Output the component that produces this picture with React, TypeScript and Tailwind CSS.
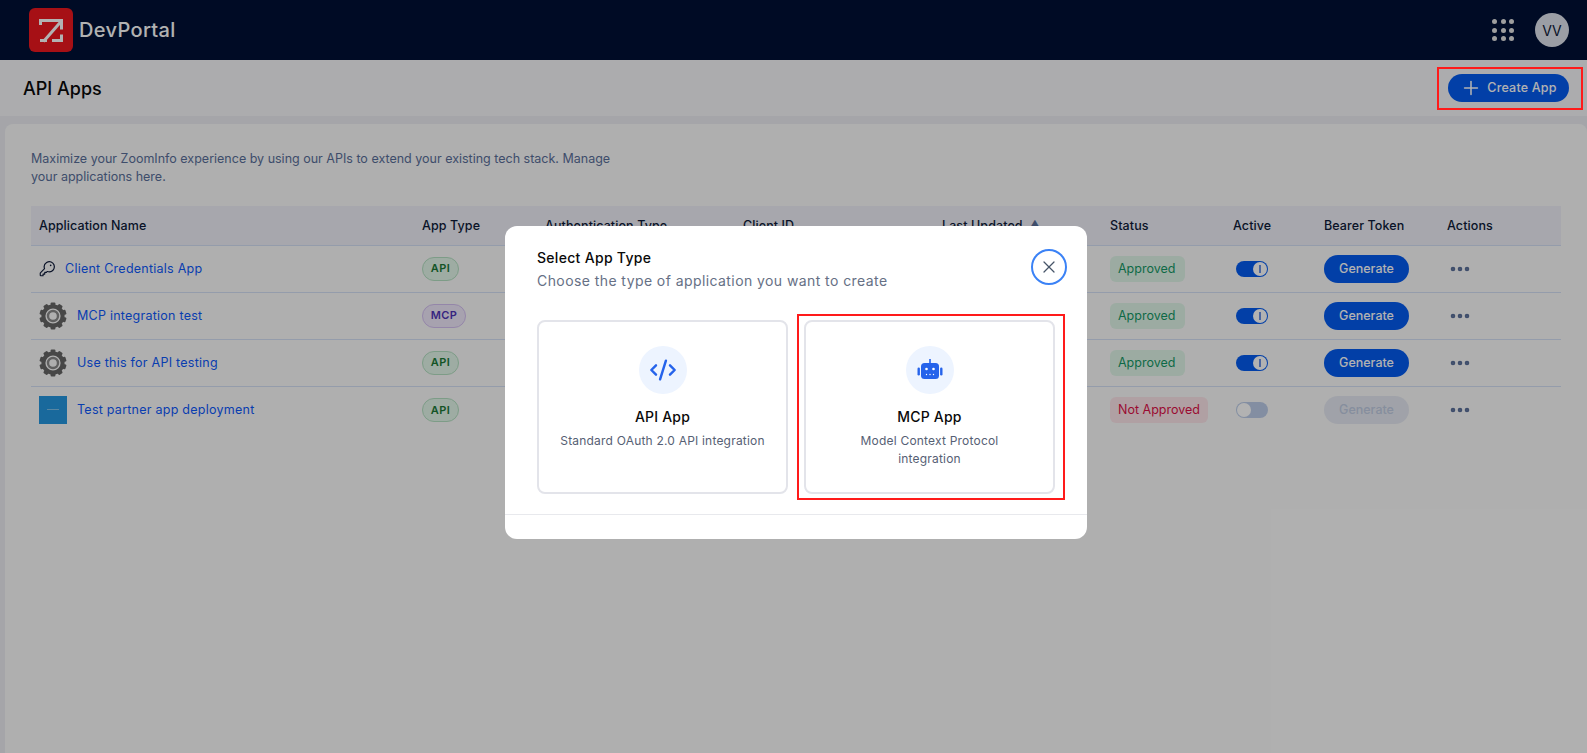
import { CodeXml, Ellipsis, Plus, X } from "lucide-react";
import { PiKey } from "react-icons/pi";

type Row = {
  name: string;
  icon: "key" | "gear" | "partner";
  type: "API" | "MCP";
  approved: boolean;
};

const rows: Row[] = [
  { name: "Client Credentials App", icon: "key", type: "API", approved: true },
  { name: "MCP integration test", icon: "gear", type: "MCP", approved: true },
  { name: "Use this for API testing", icon: "gear", type: "API", approved: true },
  { name: "Test partner app deployment", icon: "partner", type: "API", approved: false },
];

function Logo() {
  return (
    <div className="w-11 h-11 rounded-[6px] bg-[#ee181f] flex items-center justify-center">
      <svg viewBox="0 0 44 44" className="w-11 h-11" fill="none" stroke="#fff" strokeWidth="3">
        <path d="M11.5 17V12.5H25" />
        <path d="M14.5 33.5L32 13.5" />
        <path d="M24.5 12.5H32.5V21.5" />
        <path d="M11 32.5H18" />
        <path d="M23 32.5H32.5V26.5" />
      </svg>
    </div>
  );
}

function Gear() {
  const teeth = Array.from({ length: 10 }, (_, i) => i * 36);
  return (
    <svg viewBox="0 0 28 28" className="w-7 h-7">
      {teeth.map((deg) => (
        <rect key={deg} x="11.6" y="0.4" width="4.8" height="5" rx="1" fill="#666" transform={`rotate(${deg} 14 14)`} />
      ))}
      <circle cx="14" cy="14" r="9.6" fill="none" stroke="#666" strokeWidth="4" />
      <circle cx="14" cy="14" r="5" fill="none" stroke="#8a8a8a" strokeWidth="2.4" />
    </svg>
  );
}

function AppIcon({ icon }: { icon: Row["icon"] }) {
  if (icon === "key") return <PiKey className="w-[18px] h-[18px] text-[#0e1a39] -ml-px mr-[9px]" />;
  if (icon === "gear") return <div className="mr-[10px]"><Gear /></div>;
  return (
    <div className="w-7 h-7 mr-[10px] bg-[#2597e0] flex items-center justify-center">
      <div className="w-3 h-px bg-[#7fc0e8]" />
    </div>
  );
}

function TypeBadge({ type }: { type: Row["type"] }) {
  const cls =
    type === "API"
      ? "w-[37px] bg-[#e3f6ea] border-[#b4e0c2] text-[#1c7a37]"
      : "w-[44px] bg-[#efe9fb] border-[#d5c0f2] text-[#4f34b8]";
  return (
    <span className={`inline-flex h-6 items-center justify-center rounded-full border text-[11px] font-semibold tracking-[0.4px] ${cls}`}>
      {type}
    </span>
  );
}

function Toggle({ on }: { on: boolean }) {
  return (
    <div className={`w-8 h-4 rounded-full flex items-center px-px ml-[3px] ${on ? "bg-[#045bf0] justify-end" : "bg-[#bccce8]"}`}>
      <div className="w-[14px] h-[14px] rounded-full bg-white flex items-center justify-center">
        {on && <div className="w-[2px] h-2 bg-[#6c93e6]" />}
      </div>
    </div>
  );
}

function AppTypeCard({ title, text, icon }: { title: string; text: React.ReactNode; icon: React.ReactNode }) {
  return (
    <div className="w-[251px] h-[174px] rounded-lg border-2 border-[#e3e4ea] flex flex-col items-center pt-6 px-2 text-center">
      <div className="w-12 h-12 rounded-full bg-[#edf4ff] flex items-center justify-center text-[#2563eb]">{icon}</div>
      <div className="mt-[13px] text-[14px] leading-5 font-medium text-[#0a0a0a] tracking-[0.2px]">{title}</div>
      <div className="mt-[5px] text-[12px] leading-[18px] text-[#566074] tracking-[0.2px]">{text}</div>
    </div>
  );
}

export default function App() {
  return (
    <div className="relative h-screen overflow-hidden flex flex-col bg-[#ecedf3] font-['Inter','Liberation_Sans',sans-serif]">
      <header className="h-[60px] shrink-0 bg-[#001136] flex items-center justify-between pl-[29px] pr-[18px]">
        <div className="flex items-center gap-[6px]">
          <Logo />
          <span className="text-white text-[20px] font-medium tracking-[0.35px]">DevPortal</span>
        </div>
        <div className="flex items-center gap-[21px]">
          <div className="grid grid-cols-3 gap-[3.5px]">
            {Array.from({ length: 9 }, (_, i) => (
              <span key={i} className="w-[5px] h-[5px] rounded-full bg-[#e3e3e3]" />
            ))}
          </div>
          <div className="w-[34px] h-[34px] rounded-full bg-[#dfe3ec] flex items-center justify-center text-[14px] text-[#0e1a39]">
            VV
          </div>
        </div>
      </header>

      <div className="h-[56px] shrink-0 bg-[#f7f7fa] flex items-center justify-between pl-[23px] pr-[18px]">
        <h1 className="text-[18px] font-medium text-[#0a0a0a]">API Apps</h1>
        <button className="h-7 w-[121px] rounded-full bg-[#045bf0] flex items-center justify-center gap-[5px] text-white text-[12.5px] font-medium tracking-[0.2px]">
          <Plus className="w-[22px] h-[22px]" strokeWidth={1.7} />
          Create App
        </button>
      </div>

      <main className="flex-1 mt-2 ml-[5px] mr-0 bg-[#fbfbfb] rounded-t-lg pl-[26px] pr-[26px] pt-[26px]">
        <p className="w-[600px] text-[12.5px] leading-[18px] text-[#5a6f9a]">
          Maximize your ZoomInfo experience by using our APIs to extend your existing tech stack. Manage your applications here.
        </p>
        <table className="mt-[20px] w-[1530px] table-fixed border-collapse text-left text-[12.5px]">
          <colgroup>
            <col className="w-[383px]" />
            <col className="w-[123px]" />
            <col className="w-[198px]" />
            <col className="w-[199px]" />
            <col className="w-[168px]" />
            <col className="w-[123px]" />
            <col className="w-[91px]" />
            <col className="w-[123px]" />
            <col className="w-[122px]" />
          </colgroup>
          <thead>
            <tr className="h-[39px] bg-[#eff0f8] text-[#0e1a39] border-b border-[#d5e0f5]">
              {["Application Name", "App Type", "Authentication Type", "Client ID", "Last Updated", "Status", "Active", "Bearer Token", "Actions"].map((h) => (
                <th key={h} className="px-2 pt-[3px] font-medium tracking-[0.1px]">
                  {h}
                  {h === "Last Updated" && <span className="ml-2 text-[8px] align-top text-[#5a6f9a]">▲</span>}
                </th>
              ))}
            </tr>
          </thead>
          <tbody>
            {rows.map((r, i) => (
              <tr key={i} className={`h-[47px] ${i < 3 ? "border-b border-[#d5e0f5]" : ""}`}>
                <td className="px-2">
                  <div className="flex items-center text-[#0e59fb] tracking-[0.25px]">
                    <AppIcon icon={r.icon} />
                    <span className="pt-[2px]">{r.name}</span>
                  </div>
                </td>
                <td className="px-2"><TypeBadge type={r.type} /></td>
                <td />
                <td />
                <td />
                <td className="px-2">
                  <span
                    className={`inline-flex h-[26px] items-center px-2 pt-[2px] rounded-md ${
                      r.approved ? "w-[75px] bg-[#e0f5e8] text-[#159966]" : "w-[98px] bg-[#fde5ea] text-[#dd1048]"
                    }`}
                  >
                    {r.approved ? "Approved" : "Not Approved"}
                  </span>
                </td>
                <td className="px-2"><Toggle on={r.approved} /></td>
                <td className="px-2">
                  <button
                    className={`w-[85px] h-7 pt-[2px] rounded-full font-medium ${
                      r.approved ? "bg-[#045bf0] text-white" : "bg-[#e6e9f2] text-[#c0cce2]"
                    }`}
                  >
                    Generate
                  </button>
                </td>
                <td className="px-2">
                  <Ellipsis className="w-6 h-6 ml-[1px] text-[#5a6f9a]" strokeWidth={2.6} />
                </td>
              </tr>
            ))}
          </tbody>
        </table>
      </main>

      {/* scrim + dialog */}
      <div className="absolute inset-0 bg-black/30">
        <div className="absolute left-[505px] top-[226px] w-[582px] h-[313px] bg-white rounded-xl flex flex-col">
          <div className="flex-1 px-8 pt-[22px] relative">
            <div className="text-[14px] leading-5 font-medium text-[#0a0a0a] tracking-[0.3px]">Select App Type</div>
            <div className="mt-[3px] text-[14px] leading-5 text-[#667085] tracking-[0.42px]">
              Choose the type of application you want to create
            </div>
            <button className="absolute left-[526px] top-[23px] w-9 h-9 rounded-full border-2 border-[#3b82f6] flex items-center justify-center text-[#475569]">
              <X className="w-5 h-5" strokeWidth={1.5} />
            </button>
            <div className="mt-[29px] flex gap-4">
              <AppTypeCard
                title="API App"
                text="Standard OAuth 2.0 API integration"
                icon={<CodeXml className="w-7 h-7" strokeWidth={2.1} />}
              />
              <AppTypeCard
                title="MCP App"
                text={<>Model Context Protocol<br />integration</>}
                icon={
                  <svg viewBox="0 0 26 26" className="w-[26px] h-[26px]" fill="currentColor">
                    <rect x="12.2" y="2" width="1.6" height="5" />
                    <rect x="4" y="6" width="18" height="16" rx="3.5" />
                    <rect x="0.5" y="10.5" width="2.4" height="8" rx="1.2" />
                    <rect x="23.1" y="10.5" width="2.4" height="8" rx="1.2" />
                    <circle cx="9.5" cy="12" r="1.3" fill="#fff" />
                    <circle cx="16.5" cy="12" r="1.3" fill="#fff" />
                    <circle cx="9.5" cy="17.5" r="0.7" fill="#fff" />
                    <circle cx="13" cy="17.5" r="0.7" fill="#fff" />
                    <circle cx="16.5" cy="17.5" r="0.7" fill="#fff" />
                  </svg>
                }
              />
            </div>
          </div>
          <div className="h-[25px] shrink-0 border-t border-[#e8e9ed]" />
        </div>

        {/* review marks drawn on the capture */}
        <div className="absolute left-[797px] top-[314px] w-[268px] h-[186px] border-2 border-[#ff1a1a]" />
        <div className="absolute left-[1437px] top-[67px] w-[146px] h-[43px] border-2 border-[#ff1a1a]" />
      </div>
    </div>
  );
}
